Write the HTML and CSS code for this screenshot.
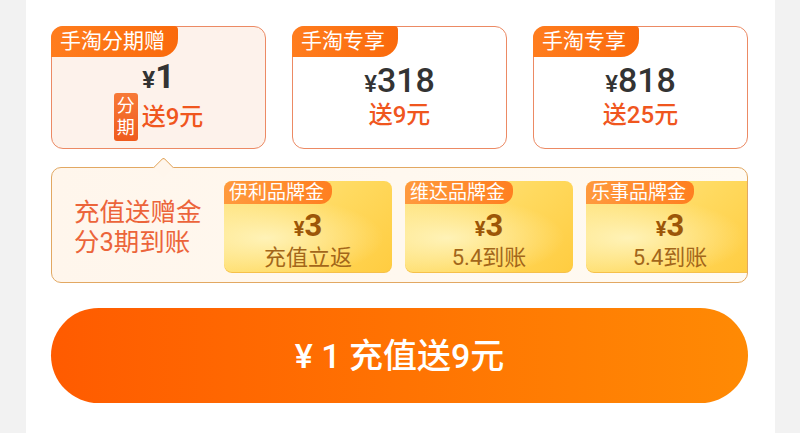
FILE: index.html
```html
<!DOCTYPE html>
<html lang="zh-CN">
<head>
<meta charset="utf-8">
<title>充值</title>
<link rel="stylesheet" href="styles.css">
</head>
<body>
<div class="sheet">
  <div class="plans">
    <div class="plan plan-active">
      <div class="plan-tag">手淘分期赠</div>
      <div class="plan-price"><span class="yen">¥</span>1</div>
      <div class="plan-gift"><span class="split"><span>分</span><span>期</span></span><span>送9元</span></div>
    </div>
    <div class="plan">
      <div class="plan-tag">手淘专享</div>
      <div class="plan-price"><span class="yen">¥</span>318</div>
      <div class="plan-gift"><span>送9元</span></div>
    </div>
    <div class="plan">
      <div class="plan-tag">手淘专享</div>
      <div class="plan-price"><span class="yen">¥</span>818</div>
      <div class="plan-gift"><span>送25元</span></div>
    </div>
  </div>

  <div class="bonus">
    <div class="bonus-title">
      <div class="bonus-line">充值送赠金</div>
      <div class="bonus-line">分3期到账</div>
    </div>
    <div class="coupons">
      <div class="coupon">
        <div class="coupon-tag">伊利品牌金</div>
        <div class="coupon-amount"><span class="yen-s">¥</span>3</div>
        <div class="coupon-note">充值立返</div>
      </div>
      <div class="coupon">
        <div class="coupon-tag">维达品牌金</div>
        <div class="coupon-amount"><span class="yen-s">¥</span>3</div>
        <div class="coupon-note">5.4到账</div>
      </div>
      <div class="coupon">
        <div class="coupon-tag">乐事品牌金</div>
        <div class="coupon-amount"><span class="yen-s">¥</span>3</div>
        <div class="coupon-note">5.4到账</div>
      </div>
    </div>
  </div>

  <button class="cta">¥ 1 充值送9元</button>
</div>
</body>
</html>
```

FILE: styles.css
```css
html, body {
  margin: 0;
  padding: 0;
}

body {
  background: #f2f2f2;
  font-family: Roboto, "Noto Sans CJK SC", sans-serif;
}

.sheet {
  box-sizing: border-box;
  width: 749px;
  height: 433px;
  margin-left: 26px;
  padding: 26px 27px 0 25px;
  background: #ffffff;
}

.plans {
  display: grid;
  grid-template-columns: repeat(3, 1fr);
  gap: 26px;
}

.plan {
  position: relative;
  box-sizing: border-box;
  height: 123px;
  padding-top: 36px;
  border: 1px solid #ec8a64;
  border-radius: 12px;
  background: #ffffff;
  text-align: center;
}

.plan-active {
  padding-top: 33px;
  background: #fdf2eb;
}

.plan-tag {
  position: absolute;
  top: -1px;
  left: -1px;
  height: 31px;
  padding: 0 13px 0 9px;
  border-radius: 12px 4px 18px 0;
  background: linear-gradient(90deg, #ff7d1e, #fa6a0c);
  color: #ffffff;
  font-size: 21px;
  line-height: 31px;
}

.plan-price {
  color: #333333;
  font-size: 34px;
  font-weight: 500;
  line-height: 34px;
}

.plan-active .plan-price {
  line-height: 32px;
  font-weight: 700;
}

.yen {
  font-size: 24px;
}

.plan-gift {
  display: flex;
  justify-content: center;
  align-items: center;
  gap: 4px;
  color: #f0561e;
  font-size: 24px;
  font-weight: 500;
  line-height: 28px;
}

.plan-active .plan-gift {
  margin-top: -3px;
}

.split {
  display: flex;
  flex-direction: column;
  justify-content: center;
  width: 24px;
  height: 48px;
  border-radius: 3px;
  background: linear-gradient(180deg, #f77a38, #ef5b1d);
  color: #ffffff;
  font-size: 18px;
  font-weight: 400;
  line-height: 22px;
}

.bonus {
  position: relative;
  display: flex;
  align-items: center;
  height: 116px;
  box-sizing: border-box;
  margin-top: 18px;
  padding: 12px 0 9px 22px;
  border: 1.5px solid #e2a862;
  border-radius: 10px;
  background: linear-gradient(90deg, #fff6ec, #fffaf2);
}

.bonus::before {
  content: "";
  position: absolute;
  top: -8.5px;
  left: 103.75px;
  width: 14px;
  height: 14px;
  border-top: 1.5px solid #e2a862;
  border-left: 1.5px solid #e2a862;
  border-top-left-radius: 3px;
  background: #fff6ec;
  transform: rotate(45deg);
}

.bonus-title {
  flex: 0 0 137px;
  margin-right: 13px;
  color: #ec643a;
  font-family: Roboto, "Noto Sans CJK SC", sans-serif;
  font-size: 25.5px;
  white-space: nowrap;
}

.bonus-line {
  height: 30px;
  line-height: 30px;
}

.coupons {
  display: flex;
  flex: 1;
  min-width: 0;
  gap: 13px;
  overflow: hidden;
}

.coupon {
  position: relative;
  flex: 0 0 168px;
  box-sizing: border-box;
  height: 92px;
  padding-top: 29px;
  border-radius: 8px;
  background:
    radial-gradient(ellipse 70% 45% at 25% 62%, rgba(255, 246, 196, 0.85), rgba(255, 246, 196, 0) 100%),
    linear-gradient(135deg, #ffe78a 0%, #ffd95e 55%, #ffcc40 100%);
  box-shadow: inset 0 -1px 0 #f6c04a;
  text-align: center;
}

.coupon-tag {
  position: absolute;
  top: 0;
  left: 0;
  height: 23px;
  padding: 0 8px 0 5px;
  border-radius: 8px 8px 12px 0;
  background: linear-gradient(90deg, #ff9a3e, #ff7f20);
  color: #ffffff;
  font-size: 19px;
  line-height: 23px;
}

.coupon-amount {
  color: #9c5608;
  font-size: 31px;
  font-weight: 700;
  line-height: 32px;
}

.yen-s {
  font-size: 20px;
}

.coupon-note {
  margin-top: 1px;
  color: #a3661a;
  font-size: 22px;
  line-height: 24px;
}

.cta {
  display: block;
  width: 100%;
  height: 95px;
  margin-top: 25px;
  padding: 0;
  border: 0;
  border-radius: 48px;
  background: linear-gradient(90deg, #ff5b00, #ff8a04);
  color: #ffffff;
  font-family: Roboto, "Noto Sans CJK SC", sans-serif;
  font-size: 34px;
  font-weight: 500;
  line-height: 40px;
}
```
